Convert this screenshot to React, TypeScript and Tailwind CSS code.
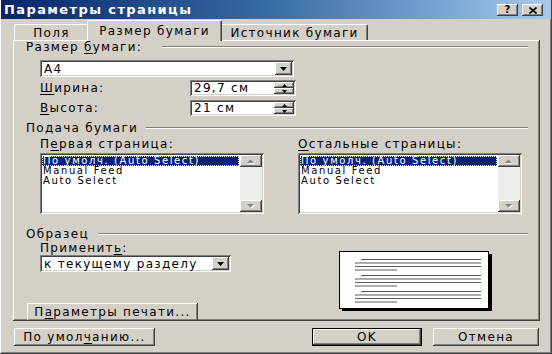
import React from 'react';

const raised =
  'shadow-[inset_-1px_-1px_0_#404040,inset_1px_1px_0_#ffffff,inset_-2px_-2px_0_#808080,inset_2px_2px_0_#d4d0c8]';
const sunken =
  'shadow-[inset_1px_1px_0_#808080,inset_-1px_-1px_0_#ffffff,inset_2px_2px_0_#404040,inset_-2px_-2px_0_#d4d0c8]';
const txt = 'text-[12px] tracking-[1.3px] leading-none';

function U({ children }: { children: React.ReactNode }) {
  return <span className="underline underline-offset-2">{children}</span>;
}

function DownArrow() {
  return (
    <svg width="7" height="4" viewBox="0 0 7 4">
      <path d="M0 0h7L3.5 4z" fill="#000" />
    </svg>
  );
}

function Combo({ value, width }: { value: string; width: string }) {
  return (
    <div className={`${sunken} ${width} h-[17px] bg-white flex items-center pl-[4px] pr-[2px]`}>
      <span className={`flex-1 ${txt}`}>{value}</span>
      <div className={`${raised} bg-[#d4d0c8] w-[17px] h-[13px] flex items-center justify-center`}>
        <DownArrow />
      </div>
    </div>
  );
}

function Spin({ value }: { value: string }) {
  return (
    <div className={`${sunken} w-[106px] h-[16px] bg-white flex items-center pl-[4px] pr-[2px]`}>
      <span className={`flex-1 ${txt}`}>{value}</span>
      <div className="flex flex-col w-[20px] h-[12px]">
        <div className={`${raised} bg-[#d4d0c8] flex-1 flex items-center justify-center`}>
          <svg width="5" height="3" viewBox="0 0 5 3">
            <path d="M0 3h5L2.5 0z" fill="#000" />
          </svg>
        </div>
        <div className={`${raised} bg-[#d4d0c8] flex-1 flex items-center justify-center`}>
          <svg width="5" height="3" viewBox="0 0 5 3">
            <path d="M0 0h5L2.5 3z" fill="#000" />
          </svg>
        </div>
      </div>
    </div>
  );
}

function GreyArrow({ up }: { up?: boolean }) {
  return (
    <svg width="8" height="5" viewBox="0 0 8 5">
      <path d={up ? 'M1 5h7L4.5 1.5z' : 'M1 1h7L4.5 4.5z'} fill="#ffffff" />
      <path d={up ? 'M0 4h7L3.5 0.5z' : 'M0 0h7L3.5 3.5z'} fill="#808080" />
    </svg>
  );
}

function ListBox({ items }: { items: string[] }) {
  return (
    <div className={`${sunken} w-[224px] h-[61px] bg-white flex p-[2px]`}>
      <div className="flex-1 flex flex-col text-[10px] tracking-[1.6px] leading-[10px] pt-[1px]">
        {items.map((item, i) => (
          <div
            key={item}
            className={
              i === 0
                ? 'h-[10px] bg-[#0a246a] text-white outline-1 outline-dotted outline-[#f0f0f0] -outline-offset-1 pl-[1px] mr-[1px]'
                : 'h-[10px] pl-[1px]'
            }
          >
            {item}
          </div>
        ))}
      </div>
      <div className="w-[22px] flex flex-col justify-between bg-[#eeede9]">
        <div className={`${raised} bg-[#d4d0c8] h-[12px] flex items-center justify-center`}>
          <GreyArrow up />
        </div>
        <div className={`${raised} bg-[#d4d0c8] h-[12px] flex items-center justify-center`}>
          <GreyArrow />
        </div>
      </div>
    </div>
  );
}

function GroupHeader({ label, gap }: { label: React.ReactNode; gap: string }) {
  return (
    <div className="h-[14px] flex items-center pl-[13px] pr-[12px]">
      <span className={txt}>{label}</span>
      <div className={`flex-1 ${gap} h-[2px] border-t border-[#808080] border-b border-b-white`} />
    </div>
  );
}

function Button({ children, width, isDefault }: { children: React.ReactNode; width: string; isDefault?: boolean }) {
  return (
    <div className={`${width} h-[18px] ${isDefault ? 'border border-black' : ''}`}>
      <div className={`${raised} h-full bg-[#d4d0c8] flex items-center justify-center ${txt}`}>{children}</div>
    </div>
  );
}

function PagePreview() {
  const para = (y: number) => (
    <g key={y} stroke="#5a5a5a" strokeWidth="1">
      <line x1="22" y1={y} x2="142" y2={y} />
      <line x1="16" y1={y + 3.5} x2="142" y2={y + 3.5} />
      <line x1="16" y1={y + 7} x2="142" y2={y + 7} />
      <line x1="16" y1={y + 10.5} x2="58" y2={y + 10.5} />
    </g>
  );
  return (
    <svg width="154" height="61" viewBox="0 0 154 61">
      <rect x="3" y="3" width="150" height="57" fill="#000" />
      <rect x="0.5" y="0.5" width="149" height="57" fill="#fff" stroke="#000" />
      {para(8.5)}
      {para(24.5)}
      {para(40.5)}
    </svg>
  );
}

export default function App() {
  return (
    <div className="w-[552px] h-[354px] bg-[#d4d0c8] font-['DejaVu_Sans',sans-serif] text-black overflow-hidden shadow-[inset_-1px_-1px_0_#404040,inset_1px_0_0_#ffffff,inset_-2px_-2px_0_#808080]">
      {/* title bar */}
      <div className="h-[19px] mx-[1px] bg-gradient-to-r from-[#0a246a] via-[#3a6ea5] to-[#a6caf0] flex items-center justify-between pl-[3px] pr-[8px]">
        <span className="text-white font-bold text-[13px] tracking-[1.4px] leading-none">Параметры страницы</span>
        <div className="flex gap-[4px] pt-[1px]">
          <div className={`${raised} w-[21px] h-[12px] bg-[#d4d0c8] flex items-center justify-center text-[10px] font-bold leading-none`}>
            ?
          </div>
          <div className={`${raised} w-[21px] h-[12px] bg-[#d4d0c8] flex items-center justify-center`}>
            <svg width="8" height="7" viewBox="0 0 8 7">
              <path d="M0.5 0.5l7 6M7.5 0.5l-7 6" stroke="#000" strokeWidth="1.6" />
            </svg>
          </div>
        </div>
      </div>

      {/* tabs */}
      <div className="h-[21px] flex items-end ml-[14px]">
        <div className={`w-[74px] h-[16px] border-t border-l border-white rounded-tl-[2px] flex items-center justify-center ${txt}`}>
          Поля
        </div>
        <div
          className={`relative z-10 w-[135px] h-[21px] -mb-[1px] -ml-[1px] bg-[#d4d0c8] border-t border-l border-white border-r border-r-[#404040] rounded-t-[2px] shadow-[inset_-1px_0_0_#808080] flex items-center justify-center pb-[1px] ${txt}`}
        >
          Размер бумаги
        </div>
        <div
          className={`w-[146px] h-[16px] border-t border-r border-white border-r-[#404040] rounded-tr-[2px] shadow-[inset_-1px_0_0_#808080] flex items-center justify-center ${txt}`}
        >
          Источник бумаги
        </div>
      </div>

      {/* panel */}
      <div className={`${raised} w-[527px] h-[281px] ml-[13px] flex flex-col`}>
        <GroupHeader label={<>Размер <U>б</U>умаги:</>} gap="ml-[20px]" />
        <div className="mt-[7px] ml-[27px]">
          <Combo value="A4" width="w-[254px]" />
        </div>
        <div className="mt-[3px] ml-[27px] flex items-center">
          <span className={`w-[150px] ${txt}`}>
            <U>Ш</U>ирина:
          </span>
          <Spin value="29,7 см" />
        </div>
        <div className="mt-[4px] ml-[27px] flex items-center">
          <span className={`w-[150px] ${txt}`}>
            <U>В</U>ысота:
          </span>
          <Spin value="21 см" />
        </div>

        <div className="mt-[5px]">
          <GroupHeader label="Подача бумаги" gap="ml-[8px]" />
        </div>
        <div className="mt-[2px] ml-[27px] flex gap-[34px]">
          <div className="w-[224px] flex flex-col gap-[2px]">
            <span className={`h-[14px] flex items-center ${txt}`}>
              П<U>е</U>рвая страница:
            </span>
            <ListBox items={['По умолч. (Auto Select)', 'Manual Feed', 'Auto Select']} />
          </div>
          <div className="w-[224px] flex flex-col gap-[2px]">
            <span className={`h-[14px] flex items-center ${txt}`}>
              <U>О</U>стальные страницы:
            </span>
            <ListBox items={['По умолч. (Auto Select)', 'Manual Feed', 'Auto Select']} />
          </div>
        </div>

        <div className="mt-[13px]">
          <GroupHeader label="Образец" gap="ml-[9px]" />
        </div>
        <div className="flex">
          <div className="ml-[14px] flex flex-col">
            <span className={`ml-[13px] h-[14px] flex items-center ${txt}`}>
              Применит<U>ь</U>:
            </span>
            <div className="ml-[13px]">
              <Combo value="к текущему разделу" width="w-[191px]" />
            </div>
            <div className="mt-[31px]">
              <Button width="w-[171px]">
                П<U>а</U>раметры печати...
              </Button>
            </div>
          </div>
          <div className="ml-[108px] mt-[10px]">
            <PagePreview />
          </div>
        </div>
      </div>

      {/* bottom buttons */}
      <div className="mt-[7px] flex">
        <div className="ml-[14px]">
          <Button width="w-[141px]">
            По умол<U>ч</U>анию...
          </Button>
        </div>
        <div className="ml-[157px]">
          <Button width="w-[110px]" isDefault>
            OK
          </Button>
        </div>
        <div className="ml-[11px]">
          <Button width="w-[106px]">Отмена</Button>
        </div>
      </div>
    </div>
  );
}
